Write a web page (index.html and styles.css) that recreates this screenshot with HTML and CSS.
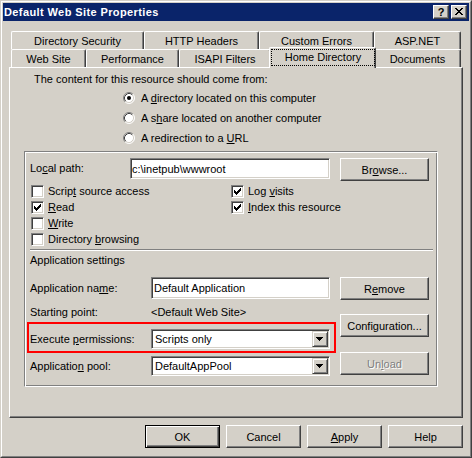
FILE: index.html
```html
<!DOCTYPE html>
<html>
<head>
<meta charset="utf-8">
<title>Default Web Site Properties</title>
<link rel="stylesheet" href="styles.css">
</head>
<body>
<div class="window">
  <div class="frame">
    <div class="titlebar">
      <span class="title">Default Web Site Properties</span>
      <span class="cbtn cbtn-help">?</span>
      <span class="cbtn cbtn-close"><svg width="8" height="7" viewBox="0 0 8 7" shape-rendering="crispEdges"><path d="M0 0h2v1h-2zM6 0h2v1h-2zM1 1h2v1h-2zM5 1h2v1h-2zM2 2h4v1h-4zM3 3h2v1h-2zM2 4h4v1h-4zM1 5h2v1h-2zM5 5h2v1h-2zM0 6h2v1h-2zM6 6h2v1h-2z" fill="#000"/></svg></span>
    </div>
    <div class="content">
      <div class="tabs">
        <div class="tabrow">
          <div class="tab t-dirsec">Directory Security</div>
          <div class="tab t-http">HTTP Headers</div>
          <div class="tab t-custom">Custom Errors</div>
          <div class="tab t-asp">ASP.NET</div>
        </div>
        <div class="tabrow">
          <div class="tab t-web">Web Site</div>
          <div class="tab t-perf">Performance</div>
          <div class="tab t-isapi">ISAPI Filters</div>
          <div class="tab tab-selected t-home"><span class="focus">Home Directory</span></div>
          <div class="tab t-docs">Documents</div>
        </div>
      </div>
      <div class="panel">
        <p class="intro">The content for this resource should come from:</p>
        <div class="radios">
          <div class="radio-row">
            <svg class="radio" width="12" height="12" viewBox="0 0 12 12"><circle cx="6" cy="6" r="5" fill="#fff"/><path d="M2.11 9.89A5.5 5.5 0 0 1 9.89 2.11" fill="none" stroke="#808080"/><path d="M9.89 2.11A5.5 5.5 0 0 1 2.11 9.89" fill="none" stroke="#fff"/><path d="M2.82 9.18A4.5 4.5 0 0 1 9.18 2.82" fill="none" stroke="#404040"/><path d="M9.18 2.82A4.5 4.5 0 0 1 2.82 9.18" fill="none" stroke="#D4D0C8"/><circle cx="6" cy="6" r="2" fill="#000"/></svg>
            <span>A <u>d</u>irectory located on this computer</span>
          </div>
          <div class="radio-row">
            <svg class="radio" width="12" height="12" viewBox="0 0 12 12"><circle cx="6" cy="6" r="5" fill="#fff"/><path d="M2.11 9.89A5.5 5.5 0 0 1 9.89 2.11" fill="none" stroke="#808080"/><path d="M9.89 2.11A5.5 5.5 0 0 1 2.11 9.89" fill="none" stroke="#fff"/><path d="M2.82 9.18A4.5 4.5 0 0 1 9.18 2.82" fill="none" stroke="#404040"/><path d="M9.18 2.82A4.5 4.5 0 0 1 2.82 9.18" fill="none" stroke="#D4D0C8"/></svg>
            <span>A s<u>h</u>are located on another computer</span>
          </div>
          <div class="radio-row">
            <svg class="radio" width="12" height="12" viewBox="0 0 12 12"><circle cx="6" cy="6" r="5" fill="#fff"/><path d="M2.11 9.89A5.5 5.5 0 0 1 9.89 2.11" fill="none" stroke="#808080"/><path d="M9.89 2.11A5.5 5.5 0 0 1 2.11 9.89" fill="none" stroke="#fff"/><path d="M2.82 9.18A4.5 4.5 0 0 1 9.18 2.82" fill="none" stroke="#404040"/><path d="M9.18 2.82A4.5 4.5 0 0 1 2.82 9.18" fill="none" stroke="#D4D0C8"/></svg>
            <span>A redirection to a <u>U</u>RL</span>
          </div>
        </div>
        <div class="group">
          <div class="path-row">
            <span class="lbl-path">Lo<u>c</u>al path:</span>
            <div class="field field-path">c:\inetpub\wwwroot</div>
            <div class="btn btn-side">Br<u>o</u>wse...</div>
          </div>
          <div class="checks">
            <div class="check-col check-col-left">
              <div class="check"><span class="box"></span><span>Scrip<u>t</u> source access</span></div>
              <div class="check"><span class="box"><svg width="7" height="7" viewBox="0 0 7 7" shape-rendering="crispEdges"><path d="M0 2h1v3h-1zM1 3h1v3h-1zM2 4h1v3h-1zM3 3h1v3h-1zM4 2h1v3h-1zM5 1h1v3h-1zM6 0h1v3h-1z" fill="#000"/></svg></span><span><u>R</u>ead</span></div>
              <div class="check"><span class="box"></span><span><u>W</u>rite</span></div>
              <div class="check"><span class="box"></span><span>Directory <u>b</u>rowsing</span></div>
            </div>
            <div class="check-col">
              <div class="check"><span class="box"><svg width="7" height="7" viewBox="0 0 7 7" shape-rendering="crispEdges"><path d="M0 2h1v3h-1zM1 3h1v3h-1zM2 4h1v3h-1zM3 3h1v3h-1zM4 2h1v3h-1zM5 1h1v3h-1zM6 0h1v3h-1z" fill="#000"/></svg></span><span>Log <u>v</u>isits</span></div>
              <div class="check"><span class="box"><svg width="7" height="7" viewBox="0 0 7 7" shape-rendering="crispEdges"><path d="M0 2h1v3h-1zM1 3h1v3h-1zM2 4h1v3h-1zM3 3h1v3h-1zM4 2h1v3h-1zM5 1h1v3h-1zM6 0h1v3h-1z" fill="#000"/></svg></span><span><u>I</u>ndex this resource</span></div>
            </div>
          </div>
          <div class="separator"></div>
          <div class="section-title">Application settings</div>
          <div class="app">
            <div class="app-left">
              <div class="app-row row-name">
                <span class="lbl-app">Application na<u>m</u>e:</span>
                <div class="field field-app">Default Application</div>
              </div>
              <div class="app-row row-start">
                <span class="lbl-app">Starting point:</span>
                <span class="start-value">&lt;Default Web Site&gt;</span>
              </div>
              <div class="highlight">
                <div class="app-row">
                  <span class="lbl-app">Execute <u>p</u>ermissions:</span>
                  <div class="combo"><span class="combo-text">Scripts only</span><span class="drop"><svg width="7" height="4" viewBox="0 0 7 4" shape-rendering="crispEdges"><path d="M0 0h7v1h-7zM1 1h5v1h-5zM2 2h3v1h-3zM3 3h1v1h-1z" fill="#000"/></svg></span></div>
                </div>
              </div>
              <div class="app-row row-pool">
                <span class="lbl-app">Applicatio<u>n</u> pool:</span>
                <div class="combo"><span class="combo-text">DefaultAppPool</span><span class="drop"><svg width="7" height="4" viewBox="0 0 7 4" shape-rendering="crispEdges"><path d="M0 0h7v1h-7zM1 1h5v1h-5zM2 2h3v1h-3zM3 3h1v1h-1z" fill="#000"/></svg></span></div>
              </div>
            </div>
            <div class="app-right">
              <div class="btn btn-side btn-remove">R<u>e</u>move</div>
              <div class="btn btn-side btn-config">Configuration...</div>
              <div class="btn btn-side btn-unload disabled">Un<u>l</u>oad</div>
            </div>
          </div>
        </div>
      </div>
      <div class="footer">
        <div class="btn btn-foot btn-default">OK</div>
        <div class="btn btn-foot">Cancel</div>
        <div class="btn btn-foot"><u>A</u>pply</div>
        <div class="btn btn-foot">Help</div>
      </div>
    </div>
  </div>
</div>
</body>
</html>
```
FILE: styles.css
```css
* { box-sizing: border-box; }
html, body { margin: 0; padding: 0; }
body {
  width: 472px;
  height: 458px;
  overflow: hidden;
  background: #D4D0C8;
  font: 11px "Liberation Sans", Arial, sans-serif;
  color: #000;
}
u { text-decoration: underline; text-underline-offset: 1px; }

.window {
  width: 472px;
  height: 458px;
  border: 1px solid;
  border-color: #D4D0C8 #404040 #404040 #D4D0C8;
}
.frame {
  height: 100%;
  border: 1px solid;
  border-color: #fff #808080 #808080 #fff;
  padding: 1px;
  background: #D4D0C8;
  display: flex;
  flex-direction: column;
}

/* title bar */
.titlebar {
  height: 18px;
  flex: none;
  background: #0A246A;
  display: flex;
  align-items: flex-start;
  padding: 2px 2px 0 1px;
}
.title {
  flex: 1;
  color: #fff;
  font-weight: bold;
  letter-spacing: 0.4px;
  line-height: 14px;
  white-space: nowrap;
}
.cbtn {
  width: 16px;
  height: 14px;
  background: #D4D0C8;
  border: 1px solid;
  border-color: #fff #404040 #404040 #fff;
  box-shadow: inset -1px -1px #808080;
  display: flex;
  align-items: center;
  justify-content: center;
}
.cbtn-help {
  font-weight: bold;
  font-size: 11px;
  line-height: 12px;
  padding-bottom: 1px;
}
.cbtn-close { margin-left: 2px; padding: 0 1px 1px 0; }
.cbtn-close svg { display: block; }

/* content */
.content {
  flex: 1;
  display: flex;
  flex-direction: column;
  padding: 10px 6px 0;
}

/* tabs */
.tabs { padding-left: 2px; }
.tabrow { display: flex; height: 18px; }
.tab {
  height: 18px;
  border: 1px solid;
  border-bottom: 0;
  border-color: #fff #404040 #404040 #fff;
  border-radius: 2px 2px 0 0;
  box-shadow: inset -1px 0 #808080;
  text-align: center;
  line-height: 14px;
  padding-top: 2px;
  white-space: nowrap;
  background: #D4D0C8;
}
.t-dirsec { width: 133px; }
.t-http { width: 115px; }
.t-custom { width: 115px; }
.t-asp { width: 87px; }
.t-web { width: 75px; }
.t-perf { width: 93px; }
.t-isapi { width: 92px; }
.t-home { width: 107px; }
.t-docs { width: 87px; }
.tab-selected {
  height: 21px;
  margin: -2px -2px -1px -2px;
  padding: 0;
  position: relative;
  z-index: 1;
}
.focus {
  display: block;
  height: 17px;
  margin: 1px 0 0 1px;
  border: 1px dotted #000;
  line-height: 14px;
}

/* panel */
.panel {
  height: 351px;
  flex: none;
  border: 1px solid;
  border-color: #fff #404040 #404040 #fff;
  box-shadow: inset -1px -1px #808080;
}
.intro {
  margin: 4px 0 0 24px;
  line-height: 14px;
}
.radios { margin: 2px 0 0 113px; }
.radio-row {
  display: flex;
  align-items: center;
  height: 20px;
  gap: 6px;
}
.radio { display: block; flex: none; }

/* group box */
.group {
  margin: 3px 0 0 14px;
  width: 414px;
  height: 236px;
  border: 1px solid;
  border-color: #808080 #fff #fff #808080;
  box-shadow: inset 1px 1px #fff, inset -1px -1px #808080;
}
.path-row {
  display: flex;
  align-items: flex-start;
  margin-top: 6px;
  padding-left: 5px;
  height: 23px;
}
.lbl-path { width: 100px; line-height: 21px; }
.field {
  background: #fff;
  border: 1px solid;
  border-color: #808080 #fff #fff #808080;
  box-shadow: inset 1px 1px #404040, inset -1px -1px #D4D0C8;
  display: flex;
  align-items: center;
  padding-left: 2px;
  white-space: nowrap;
  overflow: hidden;
}
.field-path { width: 200px; height: 21px; padding-left: 1px; }
.btn {
  background: #D4D0C8;
  border: 1px solid;
  border-color: #fff #404040 #404040 #fff;
  box-shadow: inset -1px -1px #808080;
  display: flex;
  align-items: center;
  justify-content: center;
  height: 23px;
  white-space: nowrap;
}
.btn-side { width: 89px; }
.path-row .btn-side { margin-left: 10px; }

.checks {
  display: flex;
  margin-top: 2px;
  padding-left: 6px;
}
.check-col-left { width: 200px; }
.check {
  display: flex;
  align-items: center;
  height: 16px;
}
.box {
  width: 13px;
  height: 13px;
  flex: none;
  margin-right: 4px;
  background: #fff;
  border: 1px solid;
  border-color: #808080 #fff #fff #808080;
  box-shadow: inset 1px 1px #404040, inset -1px -1px #D4D0C8;
  padding: 2px;
}
.box svg { display: block; }

.separator {
  margin: 2px 4px 0 5px;
  height: 2px;
  border-top: 1px solid #808080;
  border-bottom: 1px solid #fff;
}
.section-title {
  margin-top: 2px;
  padding-left: 5px;
  line-height: 14px;
}

.app { display: flex; padding-left: 5px; }
.app-left { width: 300px; }
.app-right { margin-left: 10px; display: flex; flex-direction: column; }
.app-row { display: flex; align-items: center; }
.lbl-app { width: 121px; flex: none; }
.row-name { margin-top: 10px; height: 22px; }
.field-app { width: 179px; height: 22px; }
.row-start { margin-top: 6px; height: 14px; line-height: 14px; }
.highlight {
  margin: 3px -6px 0 -3px;
  border: 2px solid #FF0000;
  padding: 5px 4px 2px 1px;
}
.highlight .app-row { height: 20px; }
.row-pool { margin-top: 3px; height: 20px; }
.combo {
  width: 179px;
  height: 20px;
  background: #fff;
  border: 1px solid;
  border-color: #808080 #fff #fff #808080;
  box-shadow: inset 1px 1px #404040, inset -1px -1px #D4D0C8;
  padding: 1px 1px 1px 3px;
  display: flex;
  align-items: center;
}
.combo-text { flex: 1; white-space: nowrap; }
.drop {
  width: 16px;
  height: 16px;
  background: #D4D0C8;
  border: 1px solid;
  border-color: #D4D0C8 #404040 #404040 #D4D0C8;
  box-shadow: inset 1px 1px #fff, inset -1px -1px #808080;
  display: flex;
  align-items: center;
  justify-content: center;
  padding: 0 1px 0 0;
}
.drop svg { display: block; }
.btn-remove { margin-top: 10px; }
.btn-config { margin-top: 14px; }
.btn-unload { margin-top: 15px; }
.disabled { color: #808080; text-shadow: 1px 1px 0 #fff; }

/* footer */
.footer {
  display: flex;
  justify-content: flex-end;
  gap: 6px;
  margin-top: 7px;
}
.btn-foot { width: 75px; }
.btn-default {
  border-color: #000;
  box-shadow: inset 1px 1px #fff, inset -1px -1px #404040, inset -2px -2px #808080;
}
```
